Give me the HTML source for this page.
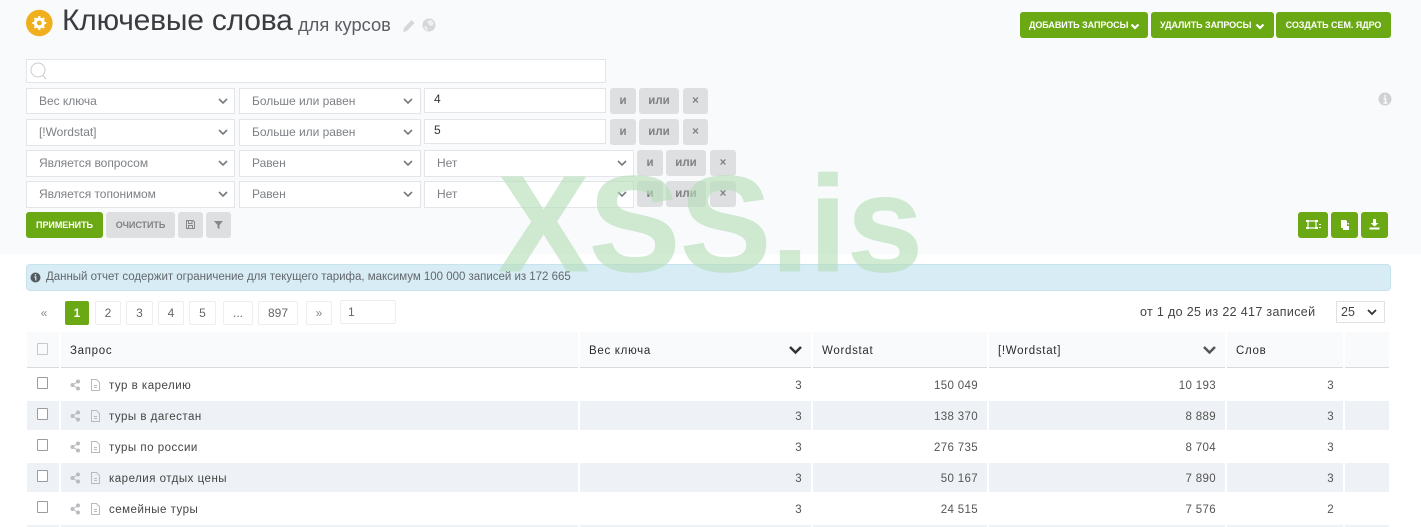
<!DOCTYPE html>
<html lang="ru"><head><meta charset="utf-8"><title>Ключевые слова</title>
<style>
html,body{margin:0;padding:0;background:#fff}
#p{position:relative;width:1421px;height:527px;overflow:hidden;background:#fff;font-family:"Liberation Sans",sans-serif;color:#555}
#p div,#p svg{position:absolute;box-sizing:border-box}
.panel{left:0;top:0;width:1421px;height:254px;background:#f9fafc}
.f{background:#fff;border:1px solid #e3e5e8;font-size:12px;line-height:25px;color:#7d8085;padding-left:12px;letter-spacing:-.03px}
#p .v{color:#333;padding-left:9px;letter-spacing:0;line-height:21px}
.g{height:26px;background:#dedfe1;border-radius:3px;color:#7f8184;font-size:11.5px;font-weight:bold;text-align:center;line-height:27px}
.b{height:26px;background:#6aa913;border-radius:3px;color:#fff;font-size:9px;font-weight:bold;text-align:center;line-height:27px;letter-spacing:-.05px;white-space:nowrap}
.pg{background:#fff;border:1px solid #eceef0;border-radius:2px;font-size:12px;color:#666;text-align:center;line-height:22px;height:24px;top:301px}
.h{top:332px;height:36px;background:#f9fafb;border-bottom:1px solid #d8dadc;font-size:11.5px;color:#2a2c2f;line-height:38px;padding-left:9px;letter-spacing:.7px}
.s{background:#eef1f5}
.t{font-size:11.5px;color:#444;letter-spacing:.5px;line-height:16px}
.n{font-size:11.5px;color:#555;text-align:right;line-height:16px;letter-spacing:.35px}
.c{left:37px;width:11px;height:12px;border:1px solid #9a9c9f;border-radius:1px;background:#fff}
</style></head><body><div id="p">
<div class="panel"></div>

<svg style="left:26px;top:9px" width="27" height="28" viewBox="0 0 27 28"><circle cx="13.3" cy="14" r="13.3" fill="#f0b01e"/><circle cx="13.3" cy="14" r="4" fill="none" stroke="#fff" stroke-width="3"/><path d="M13.3 7v3M13.3 18v3M6.3 14h3M17.3 14h3M8.4 9.1l2 2M16.2 16.9l2 2M18.2 9.1l-2 2M10.4 16.900l-2 2" stroke="#fff" stroke-width="2"/></svg>
<div style="left:62px;top:1px;font-size:30px;line-height:40px;color:#3a3c40;white-space:nowrap;letter-spacing:-.2px">Ключевые слова</div>
<div style="left:298px;top:13px;font-size:18.300px;line-height:24px;color:#5a5d61;white-space:nowrap">для курсов</div>
<svg style="left:402px;top:18px" width="14" height="15" viewBox="0 0 14 15"><path d="M1 14l1-4 7.500-8 3 3-7.500 8z" fill="#d5d7d9"/></svg>
<svg style="left:422px;top:18px" width="14" height="14" viewBox="0 0 14 14"><circle cx="7" cy="7" r="6.500" fill="#d5d7d9"/><path d="M5 3l4-1 3 3-2 3-3-1zM2 8l3 1 1 4-3-2z" fill="#eef0f1"/></svg>

<div class="b" style="left:1020px;top:12px;width:128px;text-align:left;padding-left:9px">ДОБАВИТЬ ЗАПРОСЫ</div>
<svg style="left:1130px;top:23px" width="10" height="7" viewBox="0 0 10 7"><path d="M1.500 1.500L5 5l3.500-3.500" fill="none" stroke="#fff" stroke-width="2.200"/></svg>
<div class="b" style="left:1151px;top:12px;width:123px;text-align:left;padding-left:9px">УДАЛИТЬ ЗАПРОСЫ</div>
<svg style="left:1255px;top:23px" width="10" height="7" viewBox="0 0 10 7"><path d="M1.500 1.500L5 5l3.500-3.500" fill="none" stroke="#fff" stroke-width="2.200"/></svg>
<div class="b" style="left:1276px;top:12px;width:115px">СОЗДАТЬ СЕМ. ЯДРО</div>

<div class="f" style="left:26px;top:59px;width:580px;height:24px"></div>
<svg style="left:29px;top:61px" width="19" height="19" viewBox="0 0 19 19"><circle cx="9" cy="9" r="7" fill="none" stroke="#c9cbce" stroke-width="1"/><path d="M13.500 14l3.500 4" stroke="#c9cbce"/></svg>

<div class="f" style="left:26px;top:88px;width:209px;height:26px">Вес ключа</div>
<div class="f" style="left:239px;top:88px;width:182px;height:26px">Больше или равен</div>
<div class="f v" style="left:424px;top:88px;width:182px;height:25px">4</div>
<div class="g" style="left:610px;top:88px;width:26px">и</div><div class="g" style="left:639px;top:88px;width:40px">или</div><div class="g" style="left:683px;top:88px;width:25px">×</div>

<div class="f" style="left:26px;top:119px;width:209px;height:27px">[!Wordstat]</div>
<div class="f" style="left:239px;top:119px;width:182px;height:27px">Больше или равен</div>
<div class="f v" style="left:424px;top:119px;width:182px;height:25px">5</div>
<div class="g" style="left:610px;top:119px;width:26px">и</div><div class="g" style="left:639px;top:119px;width:40px">или</div><div class="g" style="left:683px;top:119px;width:25px">×</div>

<div class="f" style="left:26px;top:150px;width:209px;height:27px">Является вопросом</div>
<div class="f" style="left:239px;top:150px;width:182px;height:27px">Равен</div>
<div class="f" style="left:424px;top:150px;width:210px;height:27px">Нет</div>
<div class="g" style="left:637px;top:150px;width:26px">и</div><div class="g" style="left:666px;top:150px;width:40px">или</div><div class="g" style="left:710px;top:150px;width:26px">×</div>

<div class="f" style="left:26px;top:181px;width:209px;height:27px">Является топонимом</div>
<div class="f" style="left:239px;top:181px;width:182px;height:27px">Равен</div>
<div class="f" style="left:424px;top:181px;width:210px;height:27px">Нет</div>
<div class="g" style="left:637px;top:181px;width:26px">и</div><div class="g" style="left:666px;top:181px;width:40px">или</div><div class="g" style="left:710px;top:181px;width:26px">×</div>

<svg style="left:0;top:0" width="1421" height="220" viewBox="0 0 1421 220" fill="none" stroke="#777a7e" stroke-width="1.600">
<path d="M219 99l4 4 4-4M219 130l4 4 4-4M219 161l4 4 4-4M219 192l4 4 4-4M404 99l4 4 4-4M404 130l4 4 4-4M404 161l4 4 4-4M404 192l4 4 4-4M618 161l4 4 4-4M618 192l4 4 4-4"/></svg>

<svg style="left:1378px;top:92px" width="14" height="14" viewBox="0 0 14 14"><circle cx="7" cy="7" r="6.500" fill="#cfd1d3"/><path d="M7 3v2M5.500 6.500H7.500V11M5.500 11h4" stroke="#f9fafc" stroke-width="1.500" fill="none"/></svg>

<div class="b" style="left:26px;top:212px;width:77px">ПРИМЕНИТЬ</div>
<div class="g" style="left:106px;top:212px;width:69px;font-size:9px;line-height:27px;letter-spacing:-.05px">ОЧИСТИТЬ</div>
<div class="g" style="left:178px;top:212px;width:25px"></div>
<svg style="left:185px;top:219px" width="11" height="11" viewBox="0 0 11 11"><path d="M1.500 1.500h6.500l1.500 1.500v6.500h-8z M3.500 1.500v3h3.500v-3M3.500 9.500v-3h4v3" fill="none" stroke="#85878a"/></svg>
<div class="g" style="left:206px;top:212px;width:25px"></div>
<svg style="left:213px;top:220px" width="11" height="10" viewBox="0 0 11 10"><path d="M1 1h9L6.500 5v4l-2-1V5z" fill="#85878a"/></svg>

<div class="b" style="left:1298px;top:212px;width:30px"></div>
<svg style="left:1306px;top:219px" width="15" height="12" viewBox="0 0 15 12"><path d="M2 2h8v7H2z" fill="none" stroke="#fff" stroke-width="1.200"/><path d="M0 1h3v2H0zM9 1h3v2H9zM0 8h3v2H0zM9 8h3v2H9zM13 5h2v1h-2zM13 8h2v1h-2z" fill="#fff"/></svg>
<div class="b" style="left:1331px;top:212px;width:27px"></div>
<svg style="left:1340px;top:219px" width="11" height="12" viewBox="0 0 11 12"><path d="M1 1h5l1 1v2h2v7H3V9H1z" fill="#fff"/><path d="M7 4l3 3H7z" fill="#6aa913"/></svg>
<div class="b" style="left:1361px;top:212px;width:27px"></div>
<svg style="left:1369px;top:219px" width="11" height="11" viewBox="0 0 11 11"><path d="M4 0h3v4h2.500L5.500 7.500 1.500 4H4zM.5 8.500h10V10.500H.5z" fill="#fff"/></svg>

<div style="left:26px;top:264px;width:1365px;height:27px;background:#d8ecf5;border:1px solid #c6e3ee;border-radius:4px"></div>
<svg style="left:30px;top:272px" width="11" height="11" viewBox="0 0 11 11"><circle cx="5.500" cy="5.500" r="5" fill="#555a5e"/><path d="M5.500 2v1.500M4.300 5H5.800V8.500" stroke="#d8ecf5" stroke-width="1.200" fill="none"/></svg>
<div style="left:46px;top:270px;font-size:11.500px;line-height:15px;color:#62686c;white-space:nowrap;letter-spacing:-.02px">Данный отчет содержит ограничение для текущего тарифа, максимум 100 000 записей из 172 665</div>

<div style="left:36px;top:301px;width:16px;text-align:center;font-size:12px;line-height:24px;color:#888">«</div>
<div class="pg" style="left:65px;width:24px;background:#6aa913;border-color:#6aa913;color:#fff;font-weight:bold">1</div>
<div class="pg" style="left:95px;width:26px">2</div>
<div class="pg" style="left:126px;width:27px">3</div>
<div class="pg" style="left:158px;width:26px">4</div>
<div class="pg" style="left:189px;width:27px">5</div>
<div class="pg" style="left:223px;width:30px">...</div>
<div class="pg" style="left:258px;width:40px">897</div>
<div class="pg" style="left:306px;width:26px;color:#888">»</div>
<div class="pg" style="left:340px;top:300px;width:56px;text-align:left;padding-left:7px">1</div>

<div style="left:1140px;top:304px;font-size:12.500px;line-height:17px;color:#444;white-space:nowrap;letter-spacing:.34px">от 1 до 25 из 22 417 записей</div>
<div style="left:1336px;top:301px;width:49px;height:22px;background:#fff;border:1px solid #dfe1e3;font-size:12.500px;line-height:20px;color:#444;padding-left:4px">25</div>
<svg style="left:1367px;top:309px" width="10" height="7" viewBox="0 0 10 7"><path d="M1 1l4 4 4-4" fill="none" stroke="#333" stroke-width="1.800"/></svg>

<div class="h" style="left:27px;width:32px"></div>
<div class="h" style="left:61px;width:517px">Запрос</div>
<div class="h" style="left:580px;width:231px">Вес ключа</div>
<div class="h" style="left:813px;width:174px">Wordstat</div>
<div class="h" style="left:989px;width:236px">[!Wordstat]</div>
<div class="h" style="left:1227px;width:116px">Слов</div>
<div class="h" style="left:1345px;width:44px"></div>
<svg style="left:788px;top:345px" width="15" height="10" viewBox="0 0 15 10"><path d="M2 2l5.500 5.500L13 2" fill="none" stroke="#333" stroke-width="2.500"/></svg>
<svg style="left:1202px;top:345px" width="15" height="10" viewBox="0 0 15 10"><path d="M2 2l5.500 5.500L13 2" fill="none" stroke="#555" stroke-width="2.500"/></svg>
<div class="c" style="top:343px;background:#f9fafb;border-color:#c5c7c9"></div>

<div class="s" style="left:27px;top:401px;width:32px;height:29px"></div><div class="s" style="left:61px;top:401px;width:517px;height:29px"></div><div class="s" style="left:580px;top:401px;width:231px;height:29px"></div><div class="s" style="left:813px;top:401px;width:174px;height:29px"></div><div class="s" style="left:989px;top:401px;width:236px;height:29px"></div><div class="s" style="left:1227px;top:401px;width:116px;height:29px"></div><div class="s" style="left:1345px;top:401px;width:44px;height:29px"></div>
<div class="s" style="left:27px;top:463px;width:32px;height:29px"></div><div class="s" style="left:61px;top:463px;width:517px;height:29px"></div><div class="s" style="left:580px;top:463px;width:231px;height:29px"></div><div class="s" style="left:813px;top:463px;width:174px;height:29px"></div><div class="s" style="left:989px;top:463px;width:236px;height:29px"></div><div class="s" style="left:1227px;top:463px;width:116px;height:29px"></div><div class="s" style="left:1345px;top:463px;width:44px;height:29px"></div>
<div class="s" style="left:27px;top:525px;width:32px;height:2px"></div><div class="s" style="left:61px;top:525px;width:517px;height:2px"></div><div class="s" style="left:580px;top:525px;width:231px;height:2px"></div><div class="s" style="left:813px;top:525px;width:174px;height:2px"></div><div class="s" style="left:989px;top:525px;width:236px;height:2px"></div><div class="s" style="left:1227px;top:525px;width:116px;height:2px"></div><div class="s" style="left:1345px;top:525px;width:44px;height:2px"></div>

<div class="c" style="top:377px"></div><div class="c" style="top:408px"></div><div class="c" style="top:439px"></div><div class="c" style="top:470px"></div><div class="c" style="top:501px"></div>

<svg style="left:70px;top:378px" width="32" height="140" viewBox="0 0 32 140">
<g fill="#b9bcbf"><circle cx="2.500" cy="7" r="2"/><circle cx="8" cy="3.500" r="2"/><circle cx="8" cy="10.500" r="2"/><path d="M2.500 7L8 3.500M2.500 7L8 10.500" stroke="#b9bcbf"/></g>
<g fill="#b9bcbf" transform="translate(0,31)"><circle cx="2.500" cy="7" r="2"/><circle cx="8" cy="3.500" r="2"/><circle cx="8" cy="10.500" r="2"/><path d="M2.500 7L8 3.500M2.500 7L8 10.500" stroke="#b9bcbf"/></g>
<g fill="#b9bcbf" transform="translate(0,62)"><circle cx="2.500" cy="7" r="2"/><circle cx="8" cy="3.500" r="2"/><circle cx="8" cy="10.500" r="2"/><path d="M2.500 7L8 3.500M2.500 7L8 10.500" stroke="#b9bcbf"/></g>
<g fill="#b9bcbf" transform="translate(0,93)"><circle cx="2.500" cy="7" r="2"/><circle cx="8" cy="3.500" r="2"/><circle cx="8" cy="10.500" r="2"/><path d="M2.500 7L8 3.500M2.500 7L8 10.500" stroke="#b9bcbf"/></g>
<g fill="#b9bcbf" transform="translate(0,124)"><circle cx="2.500" cy="7" r="2"/><circle cx="8" cy="3.500" r="2"/><circle cx="8" cy="10.500" r="2"/><path d="M2.500 7L8 3.500M2.500 7L8 10.500" stroke="#b9bcbf"/></g>
<g fill="none" stroke="#b9bcbf"><path d="M21.500 1.500h5l3 3v8h-8zM24 7.500h3M24 9.500h3"/><path transform="translate(0,31)" d="M21.500 1.500h5l3 3v8h-8zM24 7.500h3M24 9.500h3"/><path transform="translate(0,62)" d="M21.500 1.500h5l3 3v8h-8zM24 7.500h3M24 9.500h3"/><path transform="translate(0,93)" d="M21.500 1.500h5l3 3v8h-8zM24 7.500h3M24 9.500h3"/><path transform="translate(0,124)" d="M21.500 1.500h5l3 3v8h-8zM24 7.500h3M24 9.500h3"/></g>
</svg>

<div class="t" style="left:109px;top:378px">тур в карелию</div>
<div class="t" style="left:109px;top:409px">туры в дагестан</div>
<div class="t" style="left:109px;top:440px">туры по россии</div>
<div class="t" style="left:109px;top:471px">карелия отдых цены</div>
<div class="t" style="left:109px;top:502px">семейные туры</div>

<div class="n" style="left:700px;top:378px;width:102px">3</div><div class="n" style="left:860px;top:378px;width:118px">150 049</div><div class="n" style="left:1080px;top:378px;width:136px">10 193</div><div class="n" style="left:1280px;top:378px;width:54px">3</div>
<div class="n" style="left:700px;top:409px;width:102px">3</div><div class="n" style="left:860px;top:409px;width:118px">138 370</div><div class="n" style="left:1080px;top:409px;width:136px">8 889</div><div class="n" style="left:1280px;top:409px;width:54px">3</div>
<div class="n" style="left:700px;top:440px;width:102px">3</div><div class="n" style="left:860px;top:440px;width:118px">276 735</div><div class="n" style="left:1080px;top:440px;width:136px">8 704</div><div class="n" style="left:1280px;top:440px;width:54px">3</div>
<div class="n" style="left:700px;top:471px;width:102px">3</div><div class="n" style="left:860px;top:471px;width:118px">50 167</div><div class="n" style="left:1080px;top:471px;width:136px">7 890</div><div class="n" style="left:1280px;top:471px;width:54px">3</div>
<div class="n" style="left:700px;top:502px;width:102px">3</div><div class="n" style="left:860px;top:502px;width:118px">24 515</div><div class="n" style="left:1080px;top:502px;width:136px">7 576</div><div class="n" style="left:1280px;top:502px;width:54px">2</div>

<div style="left:498px;top:141px;font-size:136.500px;line-height:166px;font-weight:bold;color:#b4deb6;opacity:.6;white-space:nowrap;-webkit-text-stroke:1px #b4deb6">XSS.is</div>
</div></body></html>
